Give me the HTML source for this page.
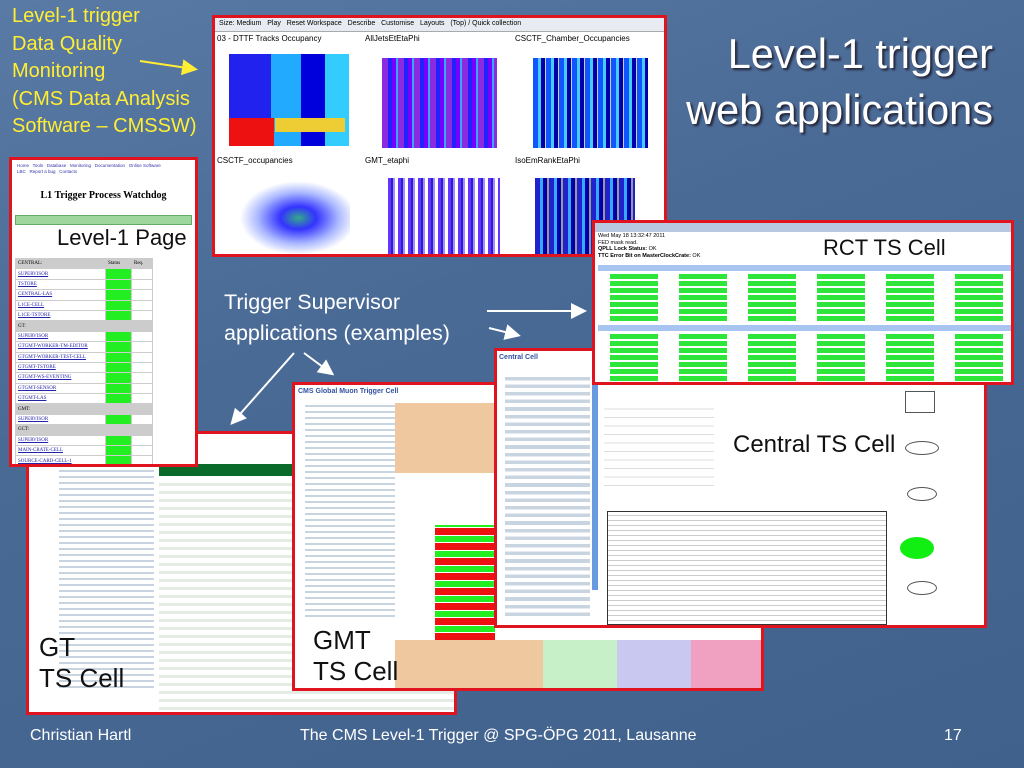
<!DOCTYPE html>
<html><head><meta charset="utf-8"><style>
*{margin:0;padding:0;box-sizing:border-box}
body{width:1024px;height:768px;overflow:hidden;position:relative;font-family:"Liberation Sans",sans-serif;
background:linear-gradient(160deg,#5a7aa6 0%,#4a6a96 40%,#41618d 100%)}
.t{position:absolute;white-space:nowrap;font-family:"Liberation Sans",sans-serif}
.box{position:absolute;border:3px solid #e0141e;background:#fff;overflow:hidden}
.lab{position:absolute;color:#111;font-family:"Liberation Sans",sans-serif;white-space:nowrap}
.tree{position:absolute;font-size:5px;line-height:7.6px;color:#333}
.lv td{height:10.4px;border:1px solid #ccc;font-size:5px;font-family:"Liberation Serif",serif;color:#22a;text-decoration:underline;padding-left:2px}
</style></head><body>

<div class="t" style="left:12px;top:3px;color:#ffee33;font-size:20px;line-height:27.5px">Level-1 trigger<br>Data Quality<br>Monitoring<br>(CMS Data Analysis<br>Software – CMSSW)</div>
<svg style="position:absolute;left:0;top:0" width="1024" height="768">
<defs><marker id="ay" markerWidth="8" markerHeight="8" refX="6" refY="4" orient="auto"><path d="M0,0 L8,4 L0,8 z" fill="#ffee33"/></marker>
<marker id="aw" markerWidth="8" markerHeight="8" refX="6" refY="4" orient="auto"><path d="M0,0 L8,4 L0,8 z" fill="#fff"/></marker></defs>
<line x1="140" y1="61" x2="194" y2="69" stroke="#ffee33" stroke-width="2" marker-end="url(#ay)"/>
<line x1="487" y1="311" x2="583" y2="311" stroke="#fff" stroke-width="2" marker-end="url(#aw)"/>
<line x1="489" y1="328" x2="517" y2="335" stroke="#fff" stroke-width="2" marker-end="url(#aw)"/>
<line x1="294" y1="353" x2="233" y2="422" stroke="#fff" stroke-width="2" marker-end="url(#aw)"/>
<line x1="304" y1="353" x2="331" y2="373" stroke="#fff" stroke-width="2" marker-end="url(#aw)"/>
</svg>

<div class="t" style="right:31px;top:26px;color:#fff;font-size:41.5px;line-height:56px;text-align:right;text-shadow:2px 2px 2px #223">Level-1 trigger<br>web applications</div>
<div class="t" style="left:224px;top:287px;color:#fff;font-size:21.5px;line-height:31px">Trigger Supervisor<br>applications (examples)</div>

<div class="box" style="left:212px;top:15px;width:455px;height:242px">
 <div style="height:14px;background:#e8ecf2;font-size:7px;padding:2px 4px;border-bottom:1px solid #aaa">Size: Medium &nbsp; Play &nbsp; Reset Workspace &nbsp; Describe &nbsp; Customise &nbsp; Layouts &nbsp; (Top) / Quick collection</div>
 <div style="position:absolute;left:2px;top:16px;font-size:8px">03 - DTTF Tracks Occupancy</div>
 <div style="position:absolute;left:150px;top:16px;font-size:8px">AllJetsEtEtaPhi</div>
 <div style="position:absolute;left:300px;top:16px;font-size:8px">CSCTF_Chamber_Occupancies</div>
 <div style="position:absolute;left:14px;top:36px;width:120px;height:92px;background:linear-gradient(90deg,#22e 0 35%,#2af 35% 60%,#00d 60% 80%,#3cf 80%)"></div>
 <div style="position:absolute;left:14px;top:100px;width:45px;height:28px;background:#e11"></div>
 <div style="position:absolute;left:60px;top:100px;width:70px;height:14px;background:#ec3"></div>
 <div style="position:absolute;left:167px;top:40px;width:115px;height:90px;background:repeating-linear-gradient(90deg,#8a2be2 0 6px,#22f 6px 10px,#70f 10px 14px,#3af 14px 16px)"></div>
 <div style="position:absolute;left:318px;top:40px;width:115px;height:90px;background:repeating-linear-gradient(90deg,#15f 0 5px,#4cf 5px 8px,#00a 8px 12px,#ccc 12px 13px)"></div>
 <div style="position:absolute;left:2px;top:138px;font-size:8px">CSCTF_occupancies</div>
 <div style="position:absolute;left:150px;top:138px;font-size:8px">GMT_etaphi</div>
 <div style="position:absolute;left:300px;top:138px;font-size:8px">IsoEmRankEtaPhi</div>
 <div style="position:absolute;left:20px;top:160px;width:115px;height:80px;background:radial-gradient(ellipse at 55% 50%,#3a8 0,#33f 20%,#aab8ff 45%,#fff 65%)"></div>
 <div style="position:absolute;left:170px;top:160px;width:115px;height:80px;background:repeating-linear-gradient(90deg,#fff 0 3px,#63f 3px 6px,#22c 6px 8px,#a8f 8px 10px)"></div>
 <div style="position:absolute;left:320px;top:160px;width:100px;height:80px;background:repeating-linear-gradient(90deg,#22c 0 5px,#3af 5px 8px,#00a 8px 12px,#999 12px 14px)"></div>
</div>

<div class="box" style="left:26px;top:431px;width:431px;height:284px">
 <div class="tree" style="left:30px;top:28px;width:95px;height:230px;background:repeating-linear-gradient(0deg,#fff 0 4px,#c8d4e0 4px 6px)"></div>
 <div style="position:absolute;left:130px;top:30px;width:300px;height:12px;background:#0a6a2a"></div>
 <div style="position:absolute;left:130px;top:46px;width:300px;height:235px;background:repeating-linear-gradient(0deg,#fff 0 5px,#e5ebe5 5px 8px),#fff"></div>
 <div class="lab" style="left:10px;top:198px;font-size:26px;line-height:31px">GT<br>TS Cell</div>
</div>

<div class="box" style="left:9px;top:157px;width:189px;height:310px">
 <div style="font-size:4.5px;color:#33a;padding:3px 5px;line-height:6px;white-space:nowrap">Home &nbsp; Tools &nbsp; Database &nbsp; Monitoring &nbsp; Documentation &nbsp; Online Software<br>LBC &nbsp; Report a bug &nbsp; Contacts</div>
 <div style="font-size:10px;font-family:'Liberation Serif',serif;text-align:center;margin-top:12px;font-weight:bold">L1 Trigger Process Watchdog</div>
 <div style="margin:14px 3px 0;height:10px;background:#9ed69e;border:1px solid #6a6"></div>
 <div class="lab" style="left:45px;top:65px;font-size:22px">Level-1 Page</div>
 <table class="lv" style="position:absolute;left:3px;top:98px;width:138px;border-collapse:collapse">
 <tbody>
 <tr style="background:#ccc"><td style="width:90px;color:#000;text-decoration:none">CENTRAL:</td><td style="color:#000;text-decoration:none">Status</td><td style="color:#000;text-decoration:none">Req.</td></tr>
 <tr><td>SUPERVISOR</td><td style="background:#2e2"></td><td></td></tr>
 <tr><td>TSTORE</td><td style="background:#2e2"></td><td></td></tr>
 <tr><td>CENTRAL-LAS</td><td style="background:#2e2"></td><td></td></tr>
 <tr><td>L1CE-CELL</td><td style="background:#2e2"></td><td></td></tr>
 <tr><td>L1CE-TSTORE</td><td style="background:#2e2"></td><td></td></tr>
 <tr style="background:#ccc"><td style="color:#000;text-decoration:none">GT:</td><td></td><td></td></tr>
 <tr><td>SUPERVISOR</td><td style="background:#2e2"></td><td></td></tr>
 <tr><td>GTGMT-WORKER-TM-EDITOR</td><td style="background:#2e2"></td><td></td></tr>
 <tr><td>GTGMT-WORKER-TEST-CELL</td><td style="background:#2e2"></td><td></td></tr>
 <tr><td>GTGMT-TSTORE</td><td style="background:#2e2"></td><td></td></tr>
 <tr><td>GTGMT-WS-EVENTING</td><td style="background:#2e2"></td><td></td></tr>
 <tr><td>GTGMT-SENSOR</td><td style="background:#2e2"></td><td></td></tr>
 <tr><td>GTGMT-LAS</td><td style="background:#2e2"></td><td></td></tr>
 <tr style="background:#ccc"><td style="color:#000;text-decoration:none">GMT:</td><td></td><td></td></tr>
 <tr><td>SUPERVISOR</td><td style="background:#2e2"></td><td></td></tr>
 <tr style="background:#ccc"><td style="color:#000;text-decoration:none">GCT:</td><td></td><td></td></tr>
 <tr><td>SUPERVISOR</td><td style="background:#2e2"></td><td></td></tr>
 <tr><td>MAIN-CRATE-CELL</td><td style="background:#2e2"></td><td></td></tr>
 <tr><td>SOURCE-CARD-CELL-1</td><td style="background:#2e2"></td><td></td></tr>
 </tbody></table>
</div>

<div class="box" style="left:292px;top:382px;width:472px;height:309px">
 <div style="font-size:7px;color:#3050a0;font-weight:bold;padding:3px">CMS Global Muon Trigger Cell</div>
 <div class="tree" style="left:10px;top:16px;width:90px;height:220px;background:repeating-linear-gradient(0deg,#fff 0 4px,#c8d4e0 4px 6px)"></div>
 <div style="position:absolute;left:100px;top:18px;width:370px;height:230px;background:linear-gradient(180deg,#f0c8a0 0 70px,#fff 70px 110px,transparent 110px)"></div>
 <div style="position:absolute;left:140px;top:140px;width:60px;height:115px;background:repeating-linear-gradient(0deg,#e11 0 7px,#fff 7px 8px,#2e2 8px 14px,#fff 14px 15px)"></div>
 <div style="position:absolute;left:100px;top:255px;width:370px;height:50px;background:linear-gradient(90deg,#f0c8a0 0 40%,#c8f0c8 40% 60%,#c8c8f0 60% 80%,#f0a0c0 80%)"></div>
 <div class="lab" style="left:18px;top:240px;font-size:26px;line-height:31px">GMT<br>TS Cell</div>
</div>

<div class="box" style="left:494px;top:348px;width:493px;height:280px">
 <div style="font-size:7px;color:#3050a0;font-weight:bold;padding:3px 2px">Central Cell</div>
 <div class="tree" style="left:8px;top:24px;width:85px;height:245px;background:repeating-linear-gradient(0deg,#fff 0 4px,#c8d4e0 4px 7.6px)"></div>
 <div style="position:absolute;left:95px;top:24px;width:6px;height:215px;background:#6a9ae0"></div>
 <div style="position:absolute;left:107px;top:50px;width:110px;height:90px;background:repeating-linear-gradient(0deg,#fff 0 5px,#ddd 5px 6px,#fff 6px 8.5px)"></div>
 <div style="position:absolute;left:110px;top:160px;width:280px;height:114px;border:1px solid #333;background:repeating-linear-gradient(0deg,#fff 0 3px,#ccc 3px 4px,#fff 4px 5px)"></div>
 <div style="position:absolute;left:403px;top:186px;width:34px;height:22px;border-radius:50%;background:#1e1"></div>
 <div style="position:absolute;left:408px;top:40px;width:30px;height:22px;border:1px solid #555"></div>
 <div style="position:absolute;left:408px;top:90px;width:34px;height:14px;border:1px solid #555;border-radius:50%"></div>
 <div style="position:absolute;left:410px;top:136px;width:30px;height:14px;border:1px solid #555;border-radius:50%"></div>
 <div style="position:absolute;left:410px;top:230px;width:30px;height:14px;border:1px solid #555;border-radius:50%"></div>
 <div class="lab" style="left:236px;top:80px;font-size:24px">Central TS Cell</div>
</div>

<div class="box" style="left:592px;top:220px;width:422px;height:165px">
 <div style="height:9px;background:#b8c8e0"></div>
 <div style="font-size:5.5px;padding:1px 3px;line-height:6.5px">Wed May 18 13:32:47 2011<br>FED mask read.<br><b>QPLL Lock Status:</b> OK<br><b>TTC Error Bit on MasterClockCrate:</b> OK</div>
 <div class="lab" style="left:228px;top:12px;font-size:22px">RCT TS Cell</div>
 <div style="position:absolute;left:3px;top:42px;width:413px;height:6px;background:#a8c4f0"></div>
 <div style="position:absolute;left:3px;top:50px;width:413px;height:50px;background:repeating-linear-gradient(0deg,#fff 0 2px,transparent 2px 7px),repeating-linear-gradient(90deg,#fff 0 12px,#2ee63a 12px 60px,#fff 60px 69px)"></div>
 <div style="position:absolute;left:3px;top:102px;width:413px;height:6px;background:#a8c4f0"></div>
 <div style="position:absolute;left:3px;top:110px;width:413px;height:50px;background:repeating-linear-gradient(0deg,#fff 0 2px,transparent 2px 7px),repeating-linear-gradient(90deg,#fff 0 12px,#2ee63a 12px 60px,#fff 60px 69px)"></div>
</div>

<div class="t" style="left:30px;top:727px;color:#fff;font-size:16px">Christian Hartl</div>
<div class="t" style="left:300px;top:727px;color:#fff;font-size:16px">The CMS Level-1 Trigger @ SPG-ÖPG 2011, Lausanne</div>
<div class="t" style="left:944px;top:727px;color:#fff;font-size:16px">17</div>
</body></html>
